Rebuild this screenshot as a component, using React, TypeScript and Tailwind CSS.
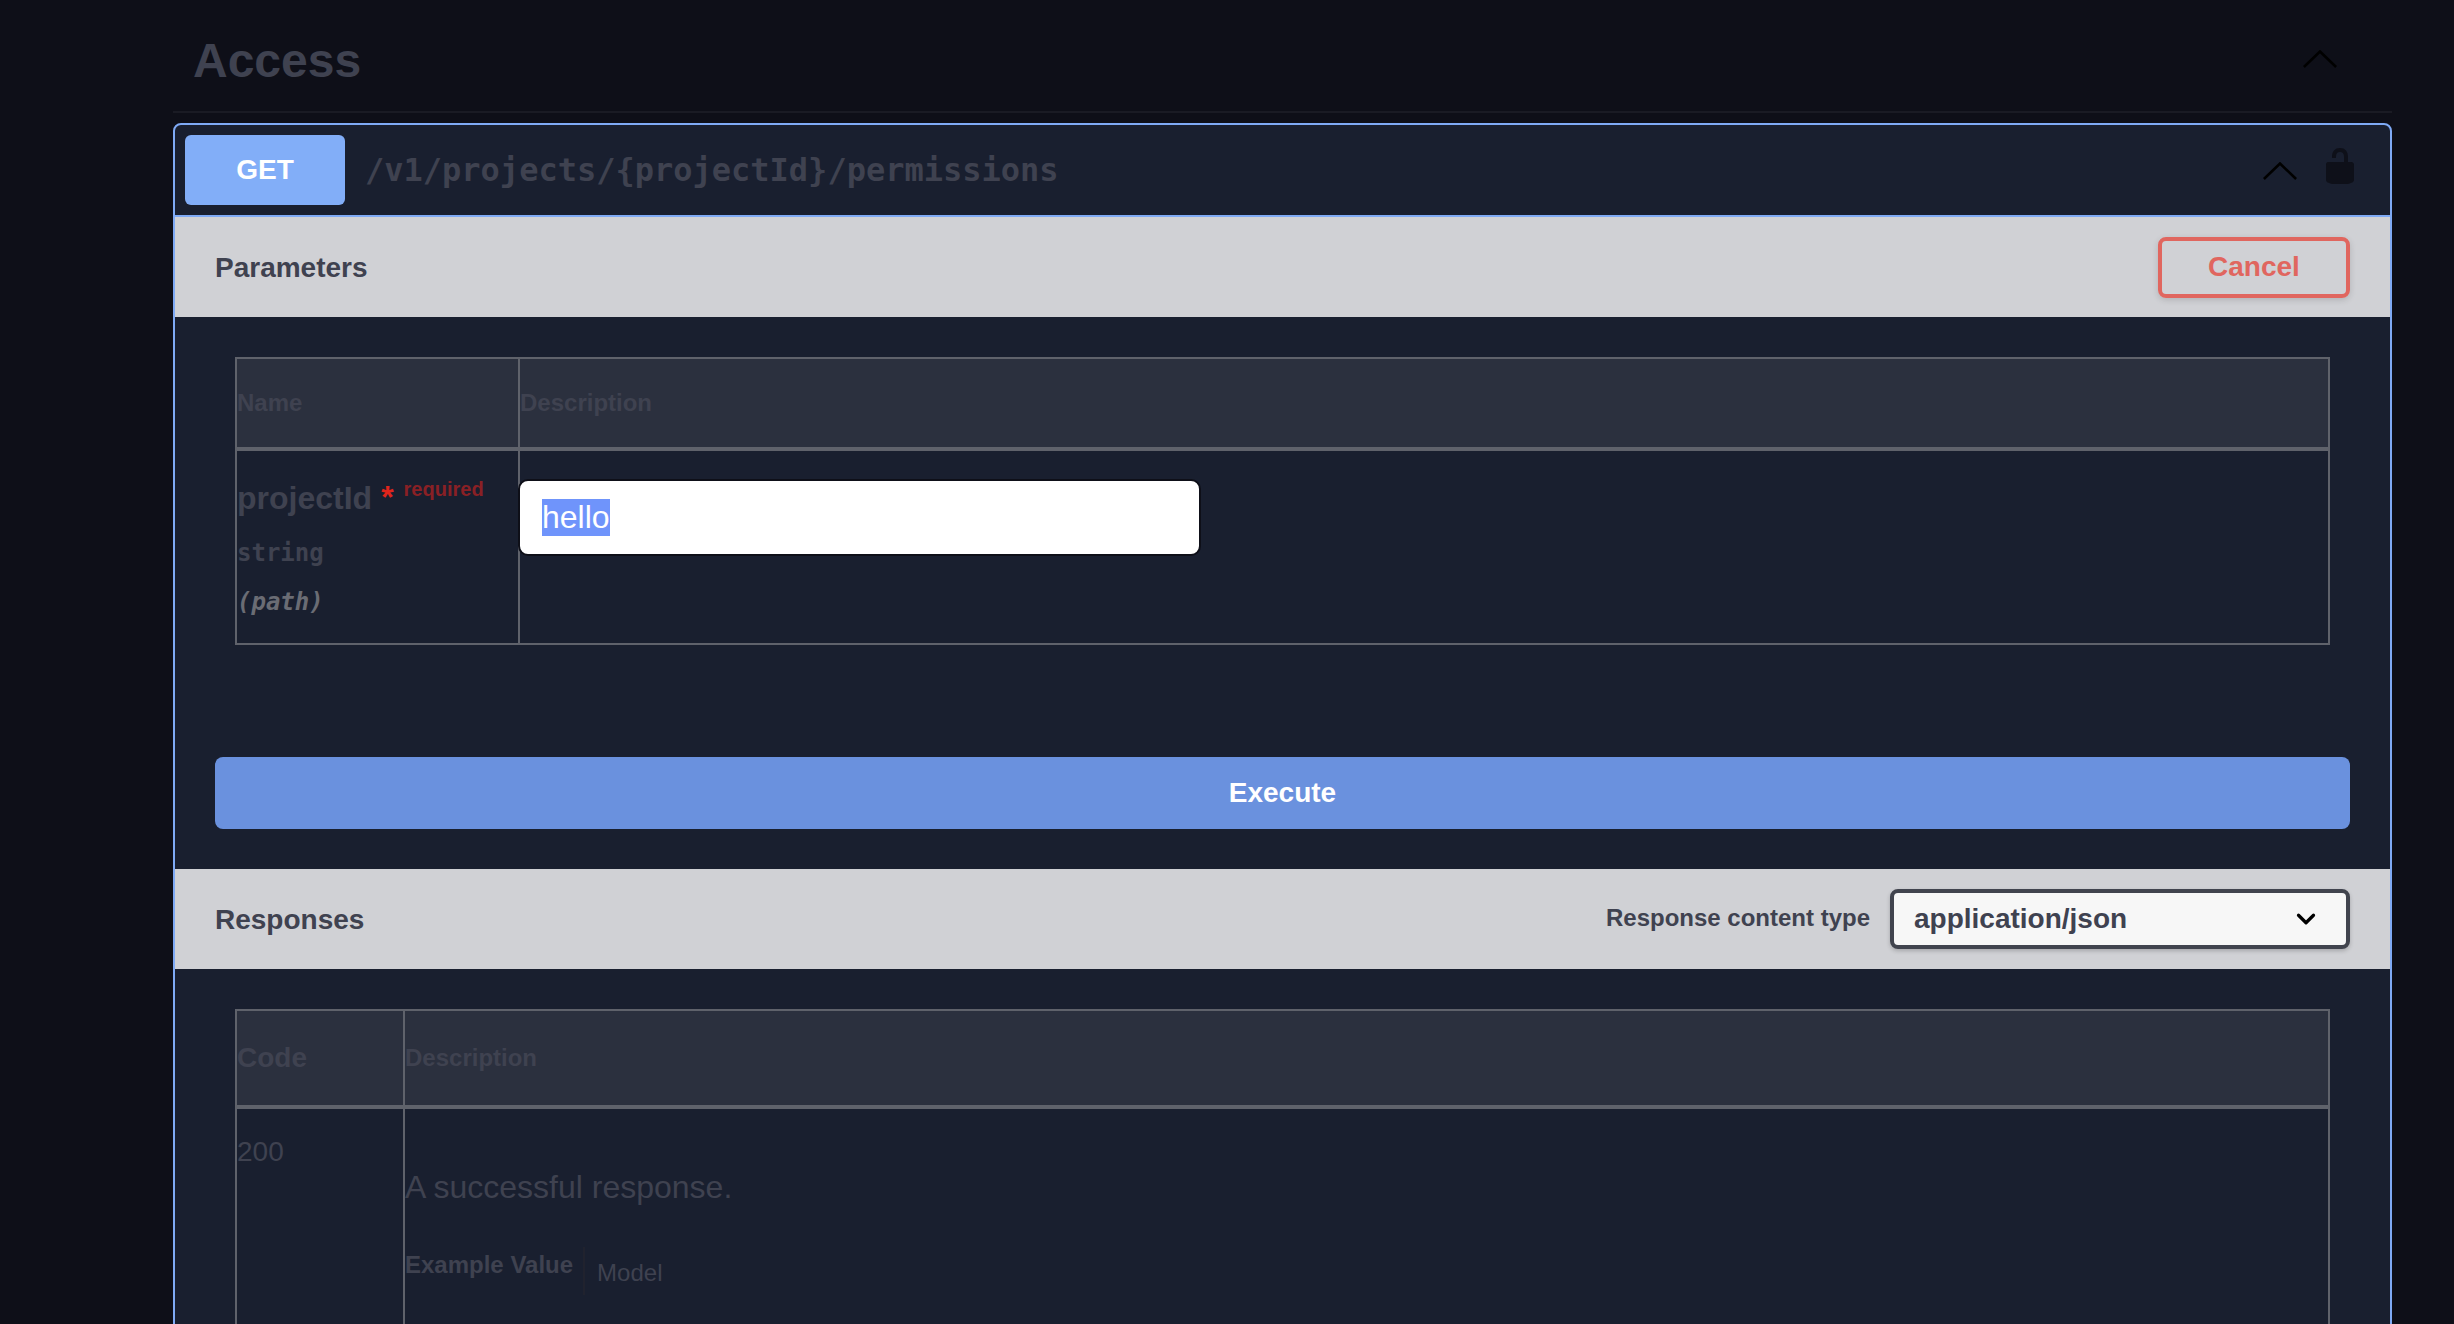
import { ChevronDown } from "lucide-react";

function Chevron({ className }: { className: string }) {
  return (
    <svg viewBox="0 0 34 18" className={className} fill="none" stroke="#000" strokeWidth="2.6">
      <path d="M0.9 17 L17 1.5 L33.1 17" />
    </svg>
  );
}

function Lock() {
  return (
    <svg viewBox="0 0 20 20" className="w-[40px] h-[40px] mb-[8px]" fill="#0e1019">
      <path d="M15.8 8H14V5.6C14 2.703 12.665 1 10 1 7.334 1 6 2.703 6 5.6V6h2v-.801C8 3.754 8.797 3 10 3c1.203 0 2 .754 2 2.199V8H4c-.553 0-1 .646-1 1.199V17c0 .549.428 1.139.951 1.307l1.197.387C5.672 18.861 6.55 19 7.1 19h5.8c.549 0 1.428-.139 1.951-.307l1.196-.387c.524-.167.953-.757.953-1.306V9.199C17 8.646 16.352 8 15.8 8z" />
    </svg>
  );
}

function SectionBar({ title, children }: { title: string; children: React.ReactNode }) {
  return (
    <div className="h-[100px] bg-[#d0d1d5] flex items-center justify-between pl-[40px] pr-[40px]">
      <h4 className="text-[28px] font-bold text-[#3f4250] pt-[2px]">{title}</h4>
      {children}
    </div>
  );
}

export default function App() {
  return (
    <div className="h-screen overflow-hidden bg-[#0e0f18] font-['Liberation_Sans',Arial,sans-serif] pl-[173px] pr-[62px]">
      <div className="h-[113px] border-b-2 border-[#1a1b24] flex items-center justify-between pl-[20px] pr-[55px] pt-[10px]">
        <h3 className="text-[48px] font-bold text-[#3f4250]">Access</h3>
        <Chevron className="w-[34px] h-[18px] -mt-[4px]" />
      </div>

      <div className="mt-[10px] border-2 border-[#7faaf5] rounded-t-[8px] bg-[#191f2f] h-[1300px]">
        <div className="h-[92px] flex items-center border-b-2 border-[#7faaf5] pl-[10px] pr-[30px]">
          <span className="w-[160px] h-[70px] bg-[#82aef8] rounded-[6px] flex items-center justify-center text-[28px] font-bold text-white">
            GET
          </span>
          <span className="ml-[20px] flex-1 font-['DejaVu_Sans_Mono',monospace] text-[32px] font-bold text-[#3f4250]">
            /v1/projects/{"{projectId}"}/permissions
          </span>
          <Chevron className="w-[34px] h-[18px] mr-[23px] mt-[2px]" />
          <Lock />
        </div>

        <SectionBar title="Parameters">
          <button className="w-[192px] h-[61px] border-[4px] border-[#e0665f] rounded-[8px] text-[28px] font-bold text-[#e0665f] shadow-[0_2px_6px_rgba(0,0,0,0.15)]">
            Cancel
          </button>
        </SectionBar>

        <div className="h-[552px] px-[40px] pt-[40px]">
          <div className="mx-[20px] border-2 border-[#5f626b]">
            <div className="flex h-[92px] bg-[#2b303e] border-b-4 border-[#5f626b] text-[24px] font-bold text-[#3f4250]">
              <div className="w-[283px] border-r-2 border-[#5f626b] flex items-center pb-[1px]">Name</div>
              <div className="flex-1 flex items-center pb-[1px]">Description</div>
            </div>
            <div className="flex h-[192px]">
              <div className="w-[283px] border-r-2 border-[#5f626b] pt-[23px]">
                <div className="flex items-start h-[53px]">
                  <span className="text-[32px] font-bold text-[#3f4250]">projectId</span>
                  <span className="ml-[9px] text-[32px] font-bold text-[#e0251c] mt-[7px] leading-none">*</span>
                  <span className="ml-[10px] text-[20px] font-bold text-[#8a2025]">required</span>
                </div>
                <div className="font-['DejaVu_Sans_Mono',monospace] text-[24px] font-bold text-[#3f4250] mt-[8px]">string</div>
                <div className="font-['DejaVu_Sans_Mono',monospace] text-[24px] font-bold italic text-[#6a6c74] mt-[13px]">(path)</div>
              </div>
              <div className="flex-1 pt-[28px]">
                <div className="-ml-[2px] w-[683px] h-[77px] bg-white border-2 border-[#0e0f18] rounded-[10px] flex items-center pl-[22px]">
                  <span className="bg-[#6f94fb] text-white text-[32px] leading-[37px]">hello</span>
                </div>
              </div>
            </div>
          </div>

          <button className="mt-[112px] w-full h-[72px] bg-[#6a91de] rounded-[8px] text-[28px] font-bold text-white">
            Execute
          </button>
        </div>

        <SectionBar title="Responses">
          <div className="flex items-center">
            <span className="text-[24px] font-bold text-[#3f4250] mr-[20px] -mt-[2px]">Response content type</span>
            <div className="w-[460px] h-[60px] bg-[#f7f7f7] border-[4px] border-[#41444e] rounded-[8px] flex items-center justify-between pl-[20px] pr-[25px] shadow-[0_2px_4px_rgba(0,0,0,0.2)]">
              <span className="text-[28px] font-bold text-[#3f4250]">application/json</span>
              <ChevronDown className="w-[30px] h-[30px] text-black" strokeWidth={2.6} />
            </div>
          </div>
        </SectionBar>

        <div className="px-[40px] pt-[40px]">
          <div className="mx-[20px] border-2 border-[#5f626b] h-[400px]">
            <div className="flex h-[98px] bg-[#2b303e] border-b-4 border-[#5f626b] font-bold text-[#3f4250]">
              <div className="w-[168px] border-r-2 border-[#5f626b] flex items-center text-[28px]">Code</div>
              <div className="flex-1 flex items-center text-[24px]">Description</div>
            </div>
            <div className="flex h-[300px]">
              <div className="w-[168px] border-r-2 border-[#5f626b] pt-[22px] text-[28px] text-[#3f4250]">200</div>
              <div className="flex-1 pt-[54px] text-[#3f4250]">
                <p className="text-[32px]">A successful response.</p>
                <div className="flex mt-[36px] h-[48px]">
                  <span className="text-[24px] font-bold pr-[10px] border-r-2 border-[#20222e]">Example Value</span>
                  <span className="text-[24px] ml-[12px] mt-[8px]">Model</span>
                </div>
              </div>
            </div>
          </div>
        </div>
      </div>
    </div>
  );
}
